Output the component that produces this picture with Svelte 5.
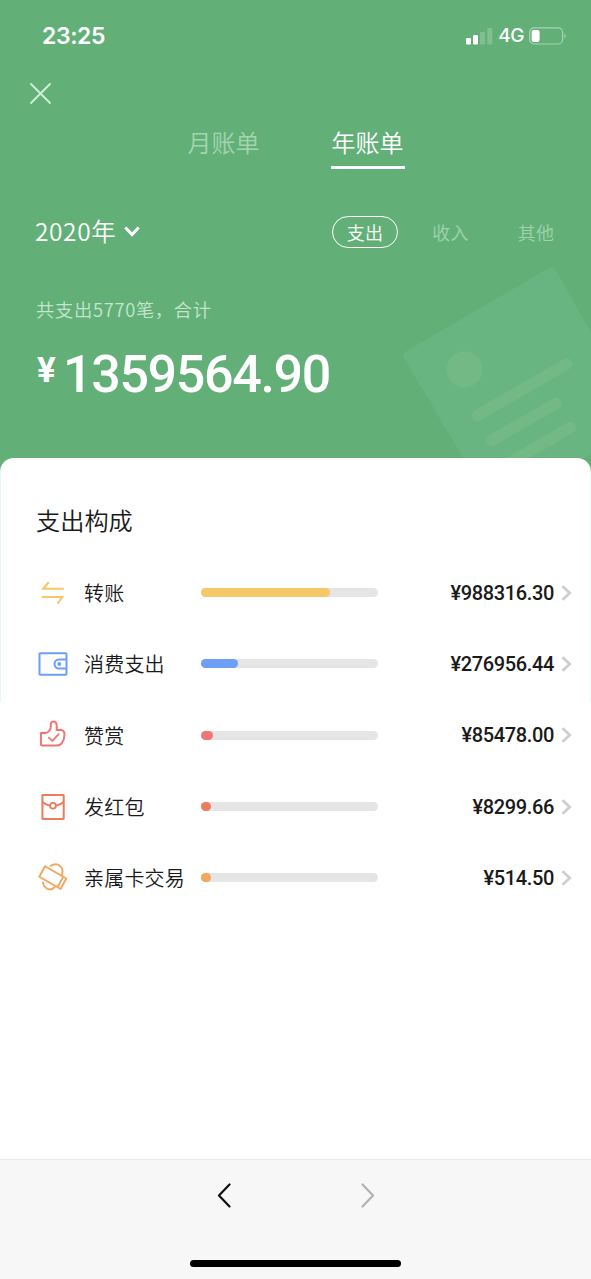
<script>
    const tabs = ['月账单', '年账单']
    const kinds = ['支出', '收入', '其他']

    let activeTab = $state('年账单')
    let activeKind = $state('支出')

    const rows = [
        { icon: 'transfer', name: '转账', amount: '988316.30', width: 129, color: '#f6c867' },
        { icon: 'wallet', name: '消费支出', amount: '276956.44', width: 37, color: '#6c9ff5' },
        { icon: 'like', name: '赞赏', amount: '85478.00', width: 12, color: '#ee7674' },
        { icon: 'packet', name: '发红包', amount: '8299.66', width: 10, color: '#ec7c5c' },
        { icon: 'card', name: '亲属卡交易', amount: '514.50', width: 10, color: '#f3a65c' }
    ]
</script>

<div class="page">
    <header>
        <svg class="paper" width="200" height="200" viewBox="391 258 200 200">
            <path d="M405 352 L549 268 Q553 266 555.500 270 L640 418 L500 520 L403.500 357 Q402 354 405 352Z" fill="#69b581" />
            <circle cx="464.500" cy="369.500" r="18" fill="#72b986" />
            <path d="M477.500 415.500 L566.500 364 M491.500 440.500 L556 403.500 M505 465.500 L570.500 427.500" stroke="#72b986" stroke-width="11.500" stroke-linecap="round" />
        </svg>

        <div class="status">
            <span class="time">23:25</span>
            <div class="signals">
                <svg width="27" height="18" viewBox="0 0 27 18" fill="#fff">
                    <rect x="0" y="11" width="5" height="6.500" rx="1.300" />
                    <rect x="7" y="8" width="5" height="9.500" rx="1.300" />
                    <rect x="14" y="5" width="5" height="12.500" rx="1.300" opacity=".2" />
                    <rect x="21.300" y="1" width="5" height="16.500" rx="1.300" opacity=".2" />
                </svg>
                <span class="net">4G</span>
                <svg width="38" height="18" viewBox="0 0 38 18">
                    <rect x=".6" y=".8" width="33" height="16.200" rx="4.500" fill="none" stroke="#fff" stroke-opacity=".45" stroke-width="1.200" />
                    <rect x="2.600" y="2.900" width="8" height="12" rx="2.200" fill="#fff" />
                    <path d="M35.500 6.500 Q38 9 35.500 11.500Z" fill="#fff" opacity=".5" />
                </svg>
            </div>
        </div>

        <div class="nav">
            <svg width="21" height="21" viewBox="0 0 21 21">
                <path d="M1 1 L20 20 M20 1 L1 20" stroke="#d1f0d9" stroke-width="1.800" stroke-linecap="round" />
            </svg>
        </div>

        <div class="tabs">
            {#each tabs as tab}
                <button class="tab" class:active={tab === activeTab} onclick={() => activeTab = tab}>{tab}</button>
            {/each}
        </div>

        <div class="filters">
            <div class="year">
                <span>2020年</span>
                <svg width="16" height="11" viewBox="0 0 16 11">
                    <path d="M1.300 1.500 L8 8.500 L14.700 1.500" fill="none" stroke="#fff" stroke-width="3" />
                </svg>
            </div>
            <div class="kinds">
                {#each kinds as kind}
                    <button class="kind" class:active={kind === activeKind} onclick={() => activeKind = kind}>{kind}</button>
                {/each}
            </div>
        </div>

        <p class="summary">共支出5770笔，合计</p>
        <div class="total"><span class="yen">¥</span><span>1359564.90</span></div>
    </header>

    <main>
        <h2>支出构成</h2>
        {#each rows as row}
            <div class="row">
                <svg class="icon" width="32" height="32" viewBox="0 0 32 32" fill="none" stroke={row.color} stroke-width="2" stroke-linejoin="round" stroke-linecap="round">
                    {#if row.icon === 'transfer'}
                        <path d="M27 11.700 H7.200 L12.200 5.800 M6.500 20 H26.300 L22 26" stroke-linejoin="miter" stroke-width="2.100" />
                    {:else if row.icon === 'wallet'}
                        <rect x="3.500" y="5.200" width="27" height="21.500" rx=".6" />
                        <path d="M30 11.500 H23 A4.500 4.500 0 0 0 23 20.500 H30" />
                        <circle cx="23.300" cy="16" r="2" fill={row.color} stroke="none" />
                    {:else if row.icon === 'like'}
                        <path d="M4.900 14 H9.500 Q14.300 12.800 14.800 8 V5.500 Q14.800 2.300 17.800 2.500 Q20.500 2.800 20.700 6.500 V11 H25 Q28.500 11.500 28.500 15.500 Q28.500 20.500 26 24 Q24.500 26.500 20.500 26.500 H6 Q4.900 26.500 4.900 25Z" />
                        <path d="M12.900 18.700 L16.300 21.800 L22.700 15.200" stroke-width="1.800" />
                    {:else if row.icon === 'packet'}
                        <rect x="6.400" y="4" width="21.300" height="24" rx=".4" />
                        <path d="M6.600 11 Q9.500 14 13.700 14.600 M20.300 14.600 Q24.500 14 27.500 11" stroke-width="1.800" />
                        <circle cx="17" cy="14.800" r="2.900" stroke-width="1.800" />
                    {:else}
                        <path d="M9 4.200 L30.300 16.500 L24.600 27 L3.300 14.700Z M27.200 14.900 L21.500 25" stroke-width="1.900" />
                        <path d="M14.700 3.700 Q20 .8 24 3.900 Q28 7.500 25.800 13 M7 20.500 Q7.500 25 11.500 26.800 Q16 28.500 18.900 24.900" stroke-width="1.900" />
                    {/if}
                </svg>
                <span class="name">{row.name}</span>
                <div class="bar">
                    <div class="fill" style="width: {row.width}px; background: {row.color}"></div>
                </div>
                <span class="amount">¥{row.amount}</span>
                <svg class="arrow" width="11" height="16" viewBox="0 0 11 16">
                    <path d="M1.500 1.300 L8.700 8 L1.500 14.700" fill="none" stroke="#cfcfcf" stroke-width="2.800" />
                </svg>
            </div>
        {/each}
    </main>

    <footer>
        <div class="pager">
            <svg width="14" height="25" viewBox="0 0 14 25">
                <path d="M12.500 1.500 L2 12.500 L12.500 23.500" fill="none" stroke="#111" stroke-width="2.200" stroke-linecap="round" stroke-linejoin="round" />
            </svg>
            <svg width="14" height="25" viewBox="0 0 14 25">
                <path d="M1.500 1.500 L12 12.500 L1.500 23.500" fill="none" stroke="#b2b2b2" stroke-width="2.200" stroke-linecap="round" stroke-linejoin="round" />
            </svg>
        </div>
        <div class="home"></div>
    </footer>
</div>

<style>
    :global(body) {
        background: #fff;
    }
    .page {
        display: flex;
        flex-direction: column;
        height: 1279px;
        overflow: hidden;
        font-family: "Noto Sans CJK SC", sans-serif;
        font-weight: 350;
        color: #1a1a1a;
        background: #62b078;
    }
    svg {
        display: block;
        flex: none;
    }
    button {
        padding: 0;
        border: 0;
        background: none;
        font: inherit;
        color: inherit;
    }
    header {
        position: relative;
        box-sizing: border-box;
        height: 458px;
        flex: none;
        color: #fff;
    }
    .paper {
        position: absolute;
        right: 0;
        bottom: 0;
    }
    .status {
        display: flex;
        align-items: center;
        justify-content: space-between;
        height: 71px;
        padding: 0 24px 0 42px;
        font-family: Inter, sans-serif;
    }
    .time {
        font-size: 23px;
        font-weight: 600;
        letter-spacing: -.4px;
    }
    .signals {
        display: flex;
        align-items: center;
    }
    .net {
        margin: 0 5px 0 5px;
        font-size: 19px;
        font-weight: 500;
        letter-spacing: -.5px;
    }
    .nav {
        display: flex;
        align-items: center;
        height: 45px;
        padding-left: 30px;
    }
    .tabs {
        display: flex;
        justify-content: center;
        gap: 70px;
        height: 53px;
    }
    .tab {
        width: 74px;
        box-sizing: border-box;
        border-bottom: 3px solid transparent;
        font-size: 24px;
        color: #a5d4b0;
    }
    .tab.active {
        border-color: #fff;
        color: #fff;
    }
    .filters {
        display: flex;
        align-items: center;
        justify-content: space-between;
        height: 125px;
        padding: 0 22px 0 35px;
    }
    .year {
        display: flex;
        align-items: center;
        gap: 8px;
        font-size: 24.500px;
        line-height: 34px;
        letter-spacing: .6px;
    }
    .year span {
        padding-bottom: 2px;
    }
    .kinds {
        display: flex;
        gap: 19.500px;
        font-size: 18px;
        color: #a0d2ad;
    }
    .kind {
        box-sizing: border-box;
        width: 66px;
        height: 32px;
        border: 1.500px solid transparent;
        border-radius: 16px;
        line-height: 26px;
        letter-spacing: .3px;
    }
    .kind.active {
        border-color: #fff;
        color: #fff;
    }
    .summary {
        margin: 0;
        padding-left: 36px;
        font-size: 18.300px;
        line-height: 30px;
        letter-spacing: .7px;
        color: #c5e5cd;
    }
    .total {
        display: flex;
        align-items: flex-start;
        padding: 20px 0 0 37px;
        font-family: Roboto, sans-serif;
        font-size: 52px;
        font-weight: 500;
        line-height: 61px;
        letter-spacing: -1.350px;
    }
    .yen {
        width: 26px;
        font-size: 35px;
        font-weight: 700;
        line-height: 54px;
    }
    main {
        flex: 1;
        padding: 45px 19px 0 36px;
        border-radius: 14px 14px 0 0;
        /* hairlines down both edges of the card's upper part */
        background:
            linear-gradient(#e9f7f6, #e9f7f6) left top / 1px 244px no-repeat,
            linear-gradient(#e9f7f6, #e9f7f6) right top / 1px 244px no-repeat,
            #fff;
    }
    h2 {
        margin: 0 0 20px;
        font-size: 24.200px;
        font-weight: 350;
        line-height: 34px;
    }
    .row {
        display: flex;
        align-items: center;
        height: 71.300px;
    }
    .name {
        width: 117px;
        margin-left: 16px;
        font-size: 20px;
        letter-spacing: .2px;
        white-space: nowrap;
    }
    .bar {
        width: 177px;
        height: 9px;
        border-radius: 5px;
        background: #e5e5e5;
    }
    .fill {
        height: 100%;
        border-radius: 5px;
    }
    .amount {
        flex: 1;
        text-align: right;
        font-family: Roboto, sans-serif;
        font-size: 20px;
        font-weight: 500;
        letter-spacing: -.35px;
    }
    .arrow {
        margin-left: 7px;
    }
    footer {
        display: flex;
        flex-direction: column;
        align-items: center;
        justify-content: space-between;
        box-sizing: border-box;
        height: 120px;
        flex: none;
        padding: 23px 0 12px;
        border-top: 1px solid #ebebeb;
        background: #f7f7f7;
    }
    .pager {
        display: flex;
        gap: 130px;
    }
    .home {
        width: 211px;
        height: 7px;
        border-radius: 4px;
        background: #000;
    }
</style>
